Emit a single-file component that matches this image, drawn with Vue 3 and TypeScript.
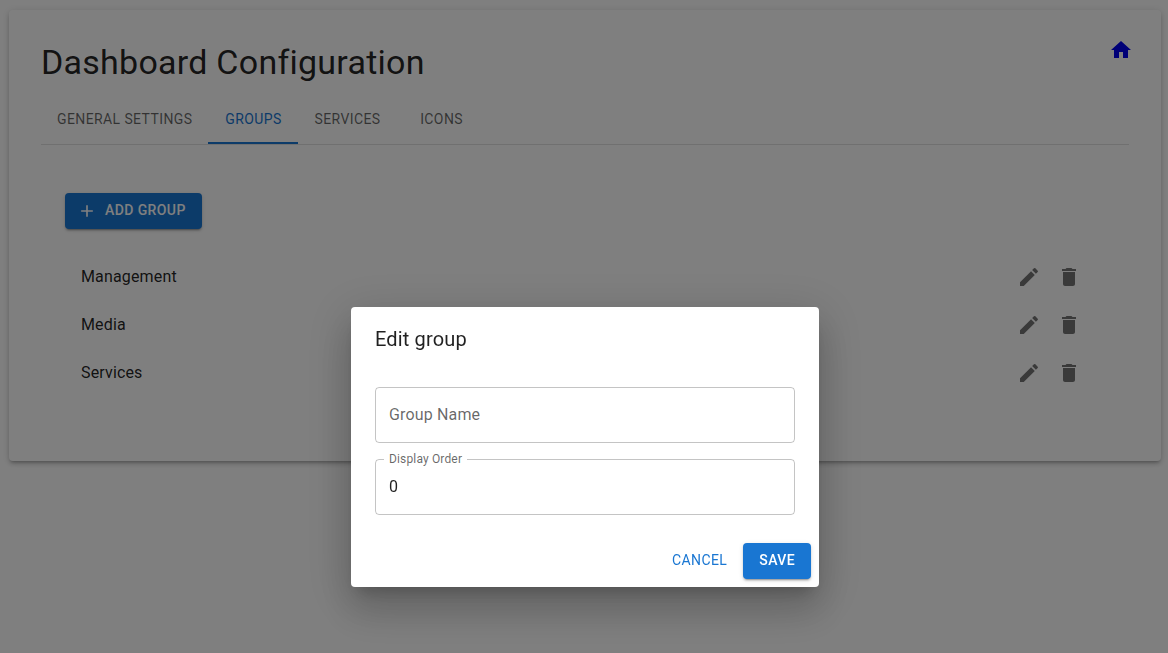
<script setup lang="ts">
import { ref } from 'vue'

const tabs: string[] = ['General Settings', 'Groups', 'Services', 'Icons']
const activeTab = ref<string>('Groups')

const groups = ref<string[]>(['Management', 'Media', 'Services'])

const dialogOpen = ref<boolean>(true)
const groupName = ref<string>('')
const displayOrder = ref<number>(0)

function openDialog(name = ''): void {
  groupName.value = name
  displayOrder.value = 0
  dialogOpen.value = true
}

function removeGroup(index: number): void {
  groups.value.splice(index, 1)
}
</script>

<template>
  <div class="page">
    <main class="card">
      <header class="header">
        <h1 class="title">Dashboard Configuration</h1>
        <a class="icon-button home" href="#" aria-label="Home">
          <svg class="icon" viewBox="0 0 24 24"><path d="M10 20v-6h4v6h5v-8h3L12 3 2 12h3v8z" /></svg>
        </a>
      </header>

      <div class="tabs" role="tablist">
        <button
          v-for="tab in tabs"
          :key="tab"
          type="button"
          role="tab"
          class="tab"
          :class="{ active: tab === activeTab }"
          :aria-selected="tab === activeTab"
          @click="activeTab = tab"
        >{{ tab }}</button>
      </div>

      <section class="panel">
        <button type="button" class="button contained" @click="openDialog()">
          <svg class="start-icon" viewBox="0 0 24 24"><path d="M19 13h-6v6h-2v-6H5v-2h6V5h2v6h6z" /></svg>
          Add Group
        </button>

        <ul class="list">
          <li v-for="(group, index) in groups" :key="group" class="item">
            <span class="item-text">{{ group }}</span>
            <button type="button" class="icon-button" :aria-label="`Edit ${group}`" @click="openDialog(group)">
              <svg class="icon" viewBox="0 0 24 24"><path d="M3 17.25V21h3.75L17.81 9.94l-3.75-3.75zM20.71 7.04c.39-.39.39-1.02 0-1.41l-2.34-2.34a.9959.9959 0 0 0-1.41 0l-1.83 1.83 3.75 3.75z" /></svg>
            </button>
            <button type="button" class="icon-button" :aria-label="`Delete ${group}`" @click="removeGroup(index)">
              <svg class="icon" viewBox="0 0 24 24"><path d="M6 19c0 1.1.9 2 2 2h8c1.1 0 2-.9 2-2V7H6zM19 4h-3.5l-1-1h-5l-1 1H5v2h14z" /></svg>
            </button>
          </li>
        </ul>
      </section>
    </main>

    <div v-if="dialogOpen" class="backdrop">
      <form class="dialog" role="dialog" aria-labelledby="dialog-title" @submit.prevent="dialogOpen = false">
        <h2 id="dialog-title" class="dialog-title">Edit group</h2>
        <div class="fields">
          <div class="field">
            <input id="group-name" v-model="groupName" class="input" type="text" />
            <label class="label" :class="{ raised: groupName !== '' }" for="group-name">Group Name</label>
          </div>
          <div class="field">
            <input id="display-order" v-model="displayOrder" class="input" type="number" />
            <label class="label raised" for="display-order">Display Order</label>
          </div>
        </div>
        <div class="actions">
          <button type="button" class="button text" @click="dialogOpen = false">Cancel</button>
          <button type="submit" class="button contained">Save</button>
        </div>
      </form>
    </div>
  </div>
</template>

<style>
body {
  margin: 0;
  background: #fff;
}
</style>

<style scoped>
.page,
.page * {
  box-sizing: border-box;
}

.page {
  min-height: 100vh;
  padding: 10px 7px 10px 9px;
  font-family: Roboto, "Liberation Sans", sans-serif;
  font-size: 16px;
  line-height: 24px;
  letter-spacing: 0.00938em;
  color: rgba(0, 0, 0, 0.87);
}

button,
input {
  font: inherit;
  color: inherit;
}

.card {
  padding: 32px;
  border-radius: 4px;
  background: #fff;
  box-shadow:
    0 3px 3px -2px rgba(0, 0, 0, 0.2),
    0 3px 4px 0 rgba(0, 0, 0, 0.14),
    0 1px 8px 0 rgba(0, 0, 0, 0.12);
}

.header {
  display: flex;
  justify-content: space-between;
  align-items: flex-start;
  margin-bottom: 14px;
}

.title {
  margin: 0;
  font-size: 34px;
  font-weight: 400;
  line-height: 40px;
  letter-spacing: 0.00735em;
}

.icon-button {
  display: flex;
  padding: 8px;
  border: 0;
  border-radius: 50%;
  background: none;
  color: rgba(0, 0, 0, 0.54);
  cursor: pointer;
}

.icon {
  width: 24px;
  height: 24px;
  fill: currentColor;
}

.home {
  margin: -12px -12px 0 0;
  color: #00e;
}

.tabs {
  display: flex;
  border-bottom: 1px solid rgba(0, 0, 0, 0.12);
}

.tab {
  min-width: 90px;
  height: 48px;
  padding: 0 16px 2px;
  border: 0;
  background: none;
  color: rgba(0, 0, 0, 0.6);
  font-size: 14px;
  font-weight: 400;
  letter-spacing: 0.02857em;
  text-transform: uppercase;
  cursor: pointer;
}

.tab.active {
  color: #1976d2;
  box-shadow: inset 0 -2px #1976d2;
}

.panel {
  padding: 48px 24px 24px;
}

.button {
  display: flex;
  align-items: center;
  justify-content: center;
  height: 36px;
  padding: 0 16px 2px;
  border: 0;
  border-radius: 4px;
  font-size: 14px;
  letter-spacing: 0.02857em;
  text-transform: uppercase;
  cursor: pointer;
}

.contained {
  background: #1976d2;
  color: #fff;
  font-weight: 500;
  box-shadow:
    0 3px 1px -2px rgba(0, 0, 0, 0.2),
    0 2px 2px 0 rgba(0, 0, 0, 0.14),
    0 1px 5px 0 rgba(0, 0, 0, 0.12);
}

.text {
  padding: 0 8px 2px;
  background: none;
  color: #1976d2;
}

.start-icon {
  width: 20px;
  height: 20px;
  margin: 2px 8px 0 -4px;
  fill: currentColor;
}

.list {
  margin: 16px 0 0;
  padding: 8px 0;
  list-style: none;
}

.item {
  display: flex;
  align-items: center;
  height: 48px;
  padding: 0 16px;
}

.item-text {
  flex: 1;
}

.backdrop {
  position: fixed;
  inset: 0;
  display: flex;
  align-items: flex-start;
  justify-content: center;
  padding: 307px 0 0 2px;
  background: rgba(0, 0, 0, 0.5);
}

.dialog {
  width: 90%;
  max-width: 468px;
  border-radius: 4px;
  background: #fff;
  box-shadow:
    0 11px 15px -7px rgba(0, 0, 0, 0.2),
    0 24px 38px 3px rgba(0, 0, 0, 0.14),
    0 9px 46px 8px rgba(0, 0, 0, 0.12);
}

.dialog-title {
  margin: 0;
  padding: 16px 24px;
  font-size: 20px;
  font-weight: 400;
  line-height: 32px;
  letter-spacing: 0.0075em;
}

.fields {
  display: grid;
  gap: 16px;
  padding: 16px 24px 20px;
}

.field {
  position: relative;
}

.input {
  display: block;
  width: 100%;
  height: 56px;
  padding: 0 13px 2px;
  border: 1px solid rgba(0, 0, 0, 0.23);
  border-radius: 4px;
  outline: 0;
  background: none;
  letter-spacing: inherit;
  appearance: textfield;
}

.input::-webkit-inner-spin-button {
  appearance: none;
  margin: 0;
}

.label {
  position: absolute;
  top: 16px;
  left: 9px;
  padding: 0 5px;
  background: #fff;
  color: rgba(0, 0, 0, 0.6);
}

.label.raised {
  top: -8px;
  font-size: 12px;
  line-height: 16px;
}

.actions {
  display: flex;
  justify-content: flex-end;
  gap: 8px;
  padding: 8px;
}
</style>
